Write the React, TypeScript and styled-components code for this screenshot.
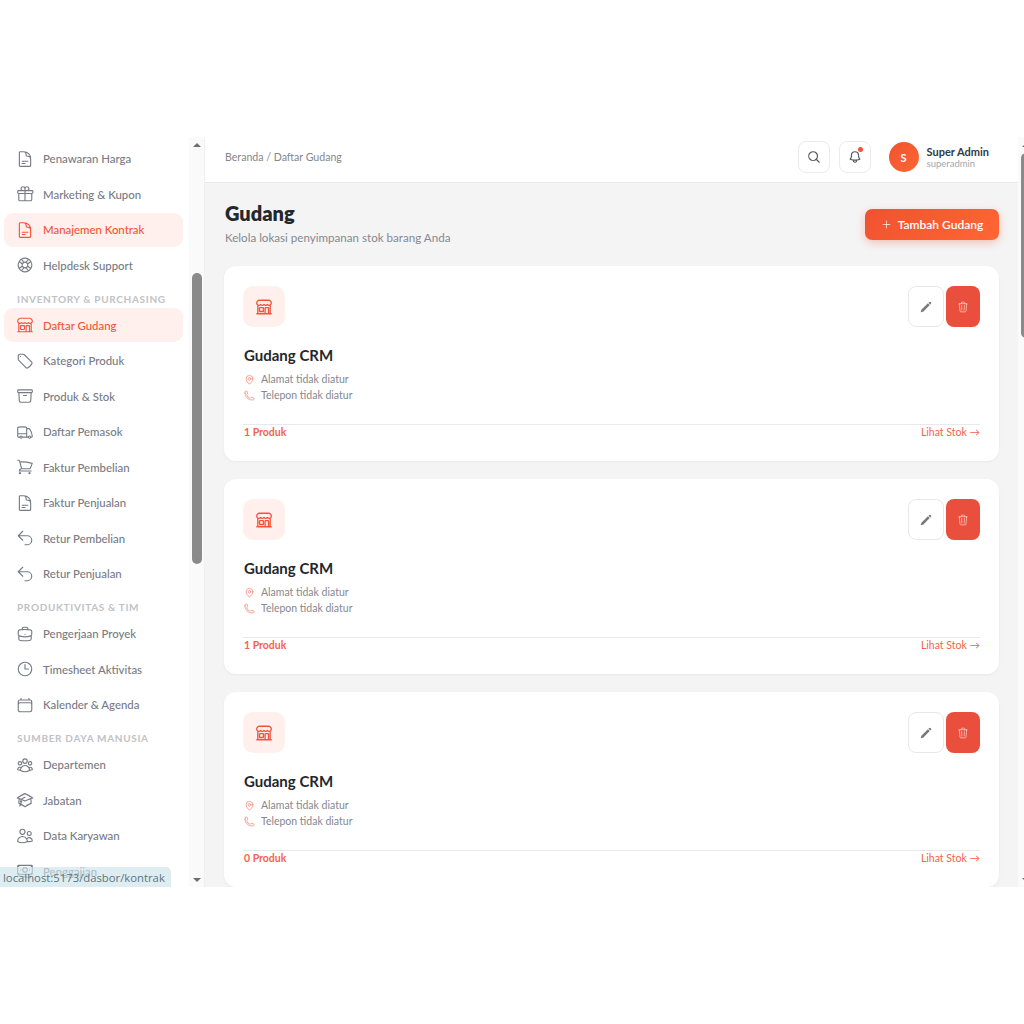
import React from 'react'
import styled, { createGlobalStyle } from 'styled-components'
import {
  HiOutlineAcademicCap,
  HiOutlineArchiveBox,
  HiOutlineArrowUturnLeft,
  HiOutlineBanknotes,
  HiOutlineBell,
  HiOutlineBriefcase,
  HiOutlineBuildingStorefront,
  HiOutlineCalendar,
  HiOutlineClock,
  HiOutlineDocumentText,
  HiOutlineGift,
  HiOutlineLifebuoy,
  HiOutlineMagnifyingGlass,
  HiOutlineMapPin,
  HiOutlinePhone,
  HiOutlinePlus,
  HiOutlineShoppingCart,
  HiOutlineTag,
  HiOutlineTrash,
  HiOutlineTruck,
  HiOutlineUserGroup,
  HiOutlineUsers,
  HiPencil,
} from 'react-icons/hi2'

const GlobalStyle = createGlobalStyle`
  html, body {
    margin: 0;
    padding: 0;
    background: #fff;
    overflow: hidden;
    height: 100%;
  }
  body {
    font-family: "Lato", "Open Sans", sans-serif;
  }
  * {
    box-sizing: border-box;
  }
`

const Page = styled.div`
  padding-top: 137px;
  width: 1033px;
`

const Frame = styled.div`
  position: relative;
  display: flex;
  height: 750px;
  overflow: hidden;
`

const Sidebar = styled.aside`
  width: 205px;
  display: flex;
  flex-shrink: 0;
  border-right: 1px solid #f0f0f0;
`

const Nav = styled.nav`
  flex: 1;
  padding: 4.5px 6px 0 4px;
  overflow: hidden;
`

const NavItem = styled.div<{ $active?: boolean }>`
  height: 34px;
  margin-bottom: 1.5px;
  display: flex;
  align-items: center;
  gap: 9px;
  padding-left: 12px;
  border-radius: 9px;
  font-size: 11.4px;
  font-weight: 500;
  background: ${(p) => (p.$active ? '#fff0ed' : 'transparent')};
  color: ${(p) => (p.$active ? '#f4533a' : '#777b84')};

  svg {
    width: 18px;
    height: 18px;
    flex-shrink: 0;
  }
`

const SectionLabel = styled.div`
  height: 14px;
  line-height: 14px;
  margin: 9.5px 0 2.5px 13px;
  font-size: 10px;
  font-weight: 700;
  letter-spacing: 0.68px;
  color: #c0c2c6;
  white-space: nowrap;
`

const Track = styled.div`
  width: 15px;
  flex-shrink: 0;
  background: #fafafa;
  display: flex;
  flex-direction: column;
  align-items: center;
`

const Arrow = styled.div<{ $down?: boolean }>`
  height: 15px;
  flex-shrink: 0;
  display: flex;
  align-items: center;
  justify-content: center;
  margin-top: ${(p) => (p.$down ? 'auto' : '0')};

  &::after {
    content: '';
    border-left: 4.5px solid transparent;
    border-right: 4.5px solid transparent;
    ${(p) => (p.$down ? 'border-top: 4.5px solid #6e6e6e;' : 'border-bottom: 4.5px solid #6e6e6e;')}
  }
`

const Thumb = styled.div<{ $top: number; $height: number }>`
  width: 10px;
  margin-top: ${(p) => p.$top}px;
  height: ${(p) => p.$height}px;
  border-radius: 5px;
  background: #8a8a8a;
  flex-shrink: 0;
`

const Main = styled.div`
  flex: 1;
  display: flex;
  min-width: 0;
`

const Column = styled.div`
  flex: 1;
  min-width: 0;
  background: #f4f4f4;
`

const Topbar = styled.header`
  height: 46px;
  background: #fff;
  border-bottom: 1px solid #e9e9e9;
  display: flex;
  align-items: center;
  padding: 0 29px 5px 20px;
`

const Crumbs = styled.div`
  font-size: 10.6px;
  color: #83868c;
  flex: 1;
  margin-top: -1px;
`

const IconButton = styled.button`
  width: 32px;
  height: 32px;
  margin-left: 9px;
  position: relative;
  display: flex;
  align-items: center;
  justify-content: center;
  padding: 0;
  background: #fff;
  border: 1px solid #ebebeb;
  border-radius: 8px;
  color: #55585e;

  svg {
    width: 14px;
    height: 14px;
    stroke-width: 2;
  }
`

const Dot = styled.span`
  position: absolute;
  top: 5px;
  right: 7px;
  width: 5px;
  height: 5px;
  border-radius: 50%;
  background: #f4533a;
`

const Avatar = styled.div`
  width: 30px;
  height: 30px;
  margin-left: 18px;
  border-radius: 50%;
  background: linear-gradient(135deg, #f05230, #ff6633);
  color: #fff;
  font-size: 11px;
  font-weight: 700;
  display: flex;
  align-items: center;
  justify-content: center;
`

const UserInfo = styled.div`
  margin-left: 8px;
`

const UserName = styled.div`
  font-size: 11px;
  line-height: 13px;
  font-weight: 700;
  color: #2f3a4a;
`

const UserLogin = styled.div`
  font-size: 9.5px;
  line-height: 11px;
  color: #a2a6ae;
`

const Content = styled.main`
  padding: 0 19px;
`

const PageHead = styled.div`
  height: 83px;
  display: flex;
  align-items: center;
  justify-content: space-between;
  padding-bottom: 3px;
`

const PageIntro = styled.div`
  padding-left: 1px;
`

const PageTitle = styled.h1`
  margin: 0 0 4px;
  font-size: 20px;
  line-height: 25px;
  font-weight: 800;
  color: #24272c;
`

const PageSub = styled.p`
  margin: 0;
  font-size: 11.6px;
  line-height: 15px;
  color: #858891;
`

const AddButton = styled.button`
  width: 134px;
  height: 31px;
  margin-top: 3px;
  border: 0;
  border-radius: 7px;
  background: linear-gradient(135deg, #f05230, #ff6633);
  box-shadow: 0 3px 8px rgba(240, 82, 48, 0.3);
  color: #fff;
  font: 600 12px "Lato", sans-serif;
  display: flex;
  align-items: center;
  justify-content: center;
  gap: 6px;

  svg {
    width: 11px;
    height: 11px;
  }
`

const Cards = styled.div`
  display: flex;
  flex-direction: column;
  gap: 18px;
`

const Card = styled.section`
  height: 195px;
  background: #fff;
  border-radius: 12px;
  padding: 20px 19px;
  box-shadow: 0 1px 3px rgba(0, 0, 0, 0.05);
  display: flex;
  flex-direction: column;
`

const CardTop = styled.div`
  display: flex;
  justify-content: space-between;
  align-items: flex-start;
`

const StoreBadge = styled.div`
  width: 42px;
  height: 41px;
  border-radius: 10px;
  background: #fff0ed;
  color: #f4533a;
  display: flex;
  align-items: center;
  justify-content: center;

  svg {
    width: 18px;
    height: 18px;
    stroke-width: 1.75;
  }
`

const Actions = styled.div`
  display: flex;
  gap: 2px;
`

const EditButton = styled.button`
  width: 36px;
  height: 41px;
  padding: 0;
  background: #fff;
  border: 1px solid #e8e8e8;
  border-radius: 8px;
  color: #7a7a7a;
  display: flex;
  align-items: center;
  justify-content: center;

  svg {
    width: 12px;
    height: 12px;
  }
`

const DeleteButton = styled.button`
  width: 34px;
  height: 41px;
  padding: 0;
  background: #ea4f3d;
  border: 0;
  border-radius: 8px;
  color: #ffc9c2;
  display: flex;
  align-items: center;
  justify-content: center;

  svg {
    width: 12px;
    height: 12px;
  }
`

const CardTitle = styled.h2`
  margin: 18px 0 6px 1px;
  font-size: 15px;
  line-height: 20px;
  font-weight: 700;
  color: #24272c;
`

const InfoRow = styled.div`
  height: 16px;
  display: flex;
  align-items: center;
  gap: 6px;
  padding-left: 1px;
  font-size: 10.5px;
  color: #85888f;

  svg {
    width: 11px;
    height: 11px;
    color: #f4806e;
    flex-shrink: 0;
  }
`

const CardFoot = styled.div`
  margin-top: 21px;
  border-top: 1px solid #e9e9e9;
  display: flex;
  justify-content: space-between;
  padding: 0 0 0 1px;
  font-size: 10.5px;
  line-height: 14px;
  color: #f4634e;
`

const Count = styled.span`
  font-weight: 700;
`

const StatusTip = styled.div`
  position: absolute;
  left: 0;
  bottom: 0;
  width: 171px;
  height: 20px;
  padding-left: 3px;
  line-height: 22px;
  font-family: "Open Sans", sans-serif;
  font-size: 11.3px;
  color: #5d7480;
  white-space: nowrap;
  background: rgba(205, 228, 234, 0.65);
  border-top-right-radius: 5px;
`

type NavEntry = { label: string; icon?: React.ComponentType; active?: boolean; section?: boolean }

const navEntries: NavEntry[] = [
  { label: 'Penawaran Harga', icon: HiOutlineDocumentText },
  { label: 'Marketing & Kupon', icon: HiOutlineGift },
  { label: 'Manajemen Kontrak', icon: HiOutlineDocumentText, active: true },
  { label: 'Helpdesk Support', icon: HiOutlineLifebuoy },
  { label: 'INVENTORY & PURCHASING', section: true },
  { label: 'Daftar Gudang', icon: HiOutlineBuildingStorefront, active: true },
  { label: 'Kategori Produk', icon: HiOutlineTag },
  { label: 'Produk & Stok', icon: HiOutlineArchiveBox },
  { label: 'Daftar Pemasok', icon: HiOutlineTruck },
  { label: 'Faktur Pembelian', icon: HiOutlineShoppingCart },
  { label: 'Faktur Penjualan', icon: HiOutlineDocumentText },
  { label: 'Retur Pembelian', icon: HiOutlineArrowUturnLeft },
  { label: 'Retur Penjualan', icon: HiOutlineArrowUturnLeft },
  { label: 'PRODUKTIVITAS & TIM', section: true },
  { label: 'Pengerjaan Proyek', icon: HiOutlineBriefcase },
  { label: 'Timesheet Aktivitas', icon: HiOutlineClock },
  { label: 'Kalender & Agenda', icon: HiOutlineCalendar },
  { label: 'SUMBER DAYA MANUSIA', section: true },
  { label: 'Departemen', icon: HiOutlineUserGroup },
  { label: 'Jabatan', icon: HiOutlineAcademicCap },
  { label: 'Data Karyawan', icon: HiOutlineUsers },
  { label: 'Penggajian', icon: HiOutlineBanknotes },
]

const warehouses = [{ products: 1 }, { products: 1 }, { products: 0 }]

export default function App() {
  return (
    <Page>
      <GlobalStyle />
      <Frame>
        <Sidebar>
          <Nav>
            {navEntries.map((entry) => {
              if (entry.section) return <SectionLabel key={entry.label}>{entry.label}</SectionLabel>
              const Icon = entry.icon!
              return (
                <NavItem key={entry.label} $active={entry.active}>
                  <Icon />
                  {entry.label}
                </NavItem>
              )
            })}
          </Nav>
          <Track>
            <Arrow />
            <Thumb $top={121} $height={291} />
            <Arrow $down />
          </Track>
        </Sidebar>
        <Main>
          <Column>
            <Topbar>
              <Crumbs>Beranda / Daftar Gudang</Crumbs>
              <IconButton>
                <HiOutlineMagnifyingGlass />
              </IconButton>
              <IconButton>
                <HiOutlineBell />
                <Dot />
              </IconButton>
              <Avatar>S</Avatar>
              <UserInfo>
                <UserName>Super Admin</UserName>
                <UserLogin>superadmin</UserLogin>
              </UserInfo>
            </Topbar>
            <Content>
              <PageHead>
                <PageIntro>
                  <PageTitle>Gudang</PageTitle>
                  <PageSub>Kelola lokasi penyimpanan stok barang Anda</PageSub>
                </PageIntro>
                <AddButton>
                  <HiOutlinePlus />
                  Tambah Gudang
                </AddButton>
              </PageHead>
              <Cards>
                {warehouses.map((w, i) => (
                  <Card key={i}>
                    <CardTop>
                      <StoreBadge>
                        <HiOutlineBuildingStorefront />
                      </StoreBadge>
                      <Actions>
                        <EditButton>
                          <HiPencil />
                        </EditButton>
                        <DeleteButton>
                          <HiOutlineTrash />
                        </DeleteButton>
                      </Actions>
                    </CardTop>
                    <CardTitle>Gudang CRM</CardTitle>
                    <InfoRow>
                      <HiOutlineMapPin />
                      Alamat tidak diatur
                    </InfoRow>
                    <InfoRow>
                      <HiOutlinePhone />
                      Telepon tidak diatur
                    </InfoRow>
                    <CardFoot>
                      <Count>{w.products} Produk</Count>
                      <span>Lihat Stok →</span>
                    </CardFoot>
                  </Card>
                ))}
              </Cards>
            </Content>
          </Column>
          <Track>
            <Arrow />
            <Thumb $top={1} $height={185} />
            <Arrow $down />
          </Track>
        </Main>
        <StatusTip>localhost:5173/dasbor/kontrak</StatusTip>
      </Frame>
    </Page>
  )
}
